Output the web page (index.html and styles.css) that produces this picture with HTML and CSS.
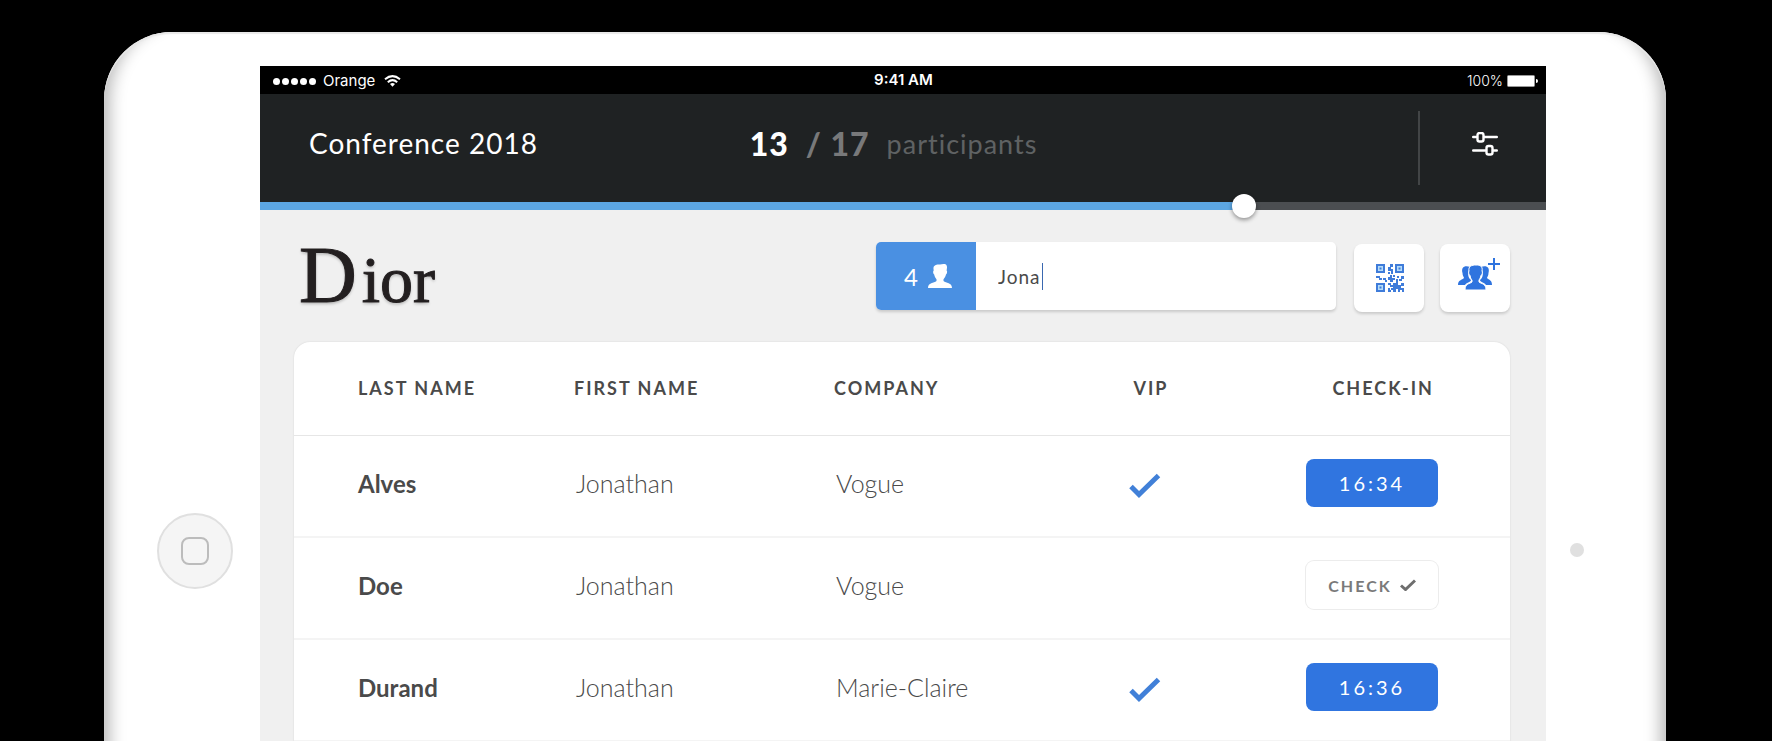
FILE: index.html
```
<!DOCTYPE html>
<html lang="en">
<head>
  <meta charset="UTF-8">
  <title>Conference 2018 - Check-in</title>
  <link rel="stylesheet" href="styles.css">
</head>
<body>

  <div class="tablet">
    <div class="bezel bezel-left">
      <button class="home-button" aria-label="Home"><span></span></button>
    </div>

    <main class="screen">
      <div class="status-bar">
        <div class="carrier">
          <div class="signal"><i></i><i></i><i></i><i></i><i></i></div>
          <span>Orange</span>
          <svg width="17" height="12" viewBox="0 0 17 12" fill="none" stroke="#fff" stroke-width="2">
            <path d="M1 4.200Q8.500-2 16 4.200M3.800 7.200Q8.500 3 13.200 7.200"/>
            <path d="M6 9Q8.500 6.800 11 9L8.500 11.800Z" fill="#fff" stroke="none"/>
          </svg>
        </div>
        <span class="clock">9:41 AM</span>
        <div class="battery">
          <span>100%</span>
          <svg width="31" height="12" viewBox="0 0 31 12">
            <rect x="0.5" y="0.5" width="27" height="11" rx="1" fill="#fff" stroke="#999"/>
            <path d="M29 4q2 0 2 2t-2 2z" fill="#fff"/>
          </svg>
        </div>
      </div>

      <header class="header">
        <h1>Conference 2018</h1>
        <p class="counter">
          <strong>13</strong>
          <span class="total">/ 17</span>
          <span class="label">participants</span>
        </p>
        <div class="actions">
          <button class="filter-button" aria-label="Filters">
            <svg width="26" height="24" viewBox="0 0 26 24" fill="none" stroke="#fff" stroke-width="2.4" stroke-linecap="round">
              <path d="M1.200 5h3M12 5h12.800M1.200 18.500h12M21 18.500h3.800"/>
              <rect x="5.500" y="1" width="6" height="8.500" rx="2"/>
              <rect x="14.500" y="14" width="6" height="8.500" rx="2"/>
            </svg>
          </button>
        </div>
      </header>
      <input class="progress" type="range" min="0" max="100" value="77" aria-label="Checked-in participants">

      <section class="content">
        <div class="toolbar">
          <div class="logo"><span>D</span>ior</div>
          <div class="search">
            <label class="search-count" for="search">
              4
              <svg width="24" height="24" viewBox="0 0 24 24" fill="#fff">
                <path d="M5.500 5C5 1 9 0 12 0.600C14 0 16-0.200 18 0.400C19.500 2 19 4 18.600 6.500C19.600 7 19 10 18 10.600C17.500 13 16.500 14 15.500 15.200V17C18 19 24 18.500 24 24H0C0 18.500 6 19 8.500 17V15.200C7.500 14 6.600 13 6.200 10.600C5 10 4.800 7 5.700 6.600Z"/>
              </svg>
            </label>
            <input type="text" id="search" value="Jona" size="4">
            <span class="caret"></span>
          </div>
          <button class="tool-button" aria-label="Scan QR code">
            <svg width="28" height="28" viewBox="0 0 28 28" fill="#3f7cda">
              <path d="M2 2h5v5h-5zM21 2h5v5h-5zM2 21h5v5h-5z" fill="#b5dcf8"/>
              <path fill-rule="evenodd" d="M0 0h9v9h-9zM2 2v5h5v-5zM19 0h9v9h-9zM21 2v5h5v-5zM0 19h9v9h-9zM2 21v5h5v-5z"/>
              <path d="M3.500 3.500h2v2h-2zM22.500 3.500h2v2h-2zM3.500 22.500h2v2h-2z"/>
              <path d="M14 0h3v3h-2v2h2v5h-2v-3h-3v-4h2zM12 8h2v2h-2zM0 12h4v2h2v2h-3v-2h-3zM7 14h3v2h-3zM12 13h2v-2h2v3h3v2h-2v2h-3v-2h-2zM17 11h2v2h-2zM21 12h2v2h-2zM25 12h3v3h-2v2h-3v-2h2zM9 16h2v2h-2zM20 15h2v2h-2z"/>
              <path d="M12 19h3v2h2v-2h3v-2h2v4h3v-2h3v3h-3v2h3v2h-4v2h-2v-3h-2v3h-3v-2h-2v-2h2v-1h-3v-2h-2zM12 24h2v2h1v2h-3zM26 26h2v2h-2z"/>
            </svg>
          </button>
          <button class="tool-button" aria-label="Add participants">
            <svg class="people" width="42" height="32" viewBox="0 0 42 32" fill="#2f74df">
              <path d="M12 9C6 7 3 10 4.500 15C4.500 18 6 19 6 20C4 22 0 22 0 27H7C9 24 13 24 13 22C10 20 9 15 12 9Z"/>
              <path d="M23 9C29 7 32 10 30.500 15C30.500 18 29 19 29 20C31 22 34 22 34 27H28C26 24 22 24 22 22C25 20 26 15 23 9Z"/>
              <path d="M11 13C10 8 14 7 18 7C22 7 25 8 24 13C25 14 24 17 23 17.500C22.500 20 21.500 21 21 22V24C23 26 28 25 28 32H7C7 25 12 26 14 24V22C13 21 12.500 20 12 17.500C11 17 10 14 11 13Z" stroke="#fff"/>
              <path d="M30 5h5V0h2v5h5v2h-5v5h-2V7h-5z"/>
            </svg>
          </button>
        </div>

        <div class="card">
          <table>
            <colgroup>
              <col class="col-last">
              <col class="col-first">
              <col class="col-company">
              <col class="col-vip">
              <col class="col-check">
            </colgroup>
            <thead>
              <tr>
                <th>LAST NAME</th>
                <th>FIRST NAME</th>
                <th>COMPANY</th>
                <th class="vip-cell">VIP</th>
                <th class="check-cell">CHECK-IN</th>
              </tr>
            </thead>
            <tbody>
              <tr>
                <td class="last-name">Alves</td>
                <td>Jonathan</td>
                <td>Vogue</td>
                <td class="vip-cell">
                  <svg class="vip" width="32" height="26" viewBox="0 0 32 26" role="img" aria-label="VIP"><path d="M2 13.500L10 21.500L29.500 2.500"/></svg>
                </td>
                <td class="check-cell"><button class="check-button checked">16:34</button></td>
              </tr>
              <tr>
                <td class="last-name">Doe</td>
                <td>Jonathan</td>
                <td>Vogue</td>
                <td></td>
                <td class="check-cell">
                  <button class="check-button">CHECK
                    <svg width="16" height="12" viewBox="0 0 16 12"><path d="M1 6.500L5.500 10.500L15 1.500"/></svg>
                  </button>
                </td>
              </tr>
              <tr>
                <td class="last-name">Durand</td>
                <td>Jonathan</td>
                <td>Marie-Claire</td>
                <td class="vip-cell">
                  <svg class="vip" width="32" height="26" viewBox="0 0 32 26" role="img" aria-label="VIP"><path d="M2 13.500L10 21.500L29.500 2.500"/></svg>
                </td>
                <td class="check-cell"><button class="check-button checked">16:36</button></td>
              </tr>
            </tbody>
          </table>
        </div>
      </section>
    </main>

    <div class="bezel bezel-right">
      <span class="camera"></span>
    </div>
  </div>

</body>
</html>
```
FILE: styles.css
```
* {
  margin: 0;
  padding: 0;
  box-sizing: border-box;
}

body {
  font-family: Lato, "Open Sans", sans-serif;
  background-color: #000;
  color: #4a4a4a;
  height: 100vh;
  overflow: hidden;
}

button {
  font-family: inherit;
  border: none;
  cursor: pointer;
}

.tablet {
  display: flex;
  min-height: 100vh;
  margin: 32px 106px 0 104px;
  padding-top: 34px;
  background-color: #fff;
  border-radius: 68px 68px 0 0;
  box-shadow: inset 0 2px 1px #e8e8e8, inset 22px 0 16px -16px #bbb, inset -22px 0 16px -16px #bbb;
}

.bezel {
  display: flex;
  justify-content: center;
}

.bezel-left {
  width: 156px;
  padding-top: 447px;
  padding-left: 26px;
}

.bezel-right {
  width: 120px;
  padding-top: 477px;
  padding-right: 58px;
}

.home-button {
  display: flex;
  align-items: center;
  justify-content: center;
  flex-shrink: 0;
  width: 76px;
  height: 76px;
  border: 2px solid #e0e0e0;
  border-radius: 50%;
  background-color: #f5f5f5;
}

.home-button span {
  width: 28px;
  height: 28px;
  border: 2px solid #bcbcbc;
  border-radius: 8px;
}

.camera {
  width: 14px;
  height: 14px;
  border-radius: 50%;
  background-color: #e0e0e0;
}

.screen {
  flex: 1;
  background-color: #f0f0f0;
}

.status-bar {
  display: grid;
  grid-template-columns: 1fr auto 1fr;
  align-items: center;
  height: 28px;
  padding: 2px 8px 0 13px;
  background-color: #000;
  color: #fff;
  font-family: Inter, sans-serif;
  font-size: 15px;
  line-height: 20px;
}

.carrier,
.battery {
  display: flex;
  align-items: center;
  gap: 7px;
}

.carrier svg {
  margin-left: 2px;
}

.battery {
  justify-content: flex-end;
  gap: 4px;
  font-size: 14px;
  font-weight: 300;
}

.signal {
  display: flex;
  gap: 2px;
}

.signal i {
  width: 7px;
  height: 7px;
  border-radius: 50%;
  background-color: #fff;
}

.clock {
  padding-right: 4px;
  padding-bottom: 2px;
  font-weight: 600;
}

.header {
  display: grid;
  grid-template-columns: 1fr auto 1fr;
  align-items: center;
  height: 108px;
  padding: 0 48px 0 49px;
  background-color: #1f2223;
  color: #fff;
}

.header h1 {
  padding-bottom: 10px;
  font-size: 28px;
  font-weight: 400;
  letter-spacing: 1px;
}

.counter {
  display: flex;
  align-items: center;
  gap: 17px;
  padding-right: 20px;
  padding-bottom: 10px;
  font-size: 32px;
}

.counter strong,
.counter .total {
  font-weight: 900;
  letter-spacing: 1px;
}

.counter .total {
  color: #78797a;
}

.counter .label {
  color: #5f6263;
  font-size: 27px;
  letter-spacing: 1px;
}

.actions {
  display: flex;
  justify-content: flex-end;
}

.filter-button {
  display: flex;
  align-items: center;
  justify-content: flex-end;
  width: 80px;
  height: 74px;
  padding-bottom: 8px;
  border-left: 2px solid #424546;
  background: none;
}

.progress {
  appearance: none;
  display: block;
  width: 100%;
  height: 8px;
  background: linear-gradient(to right, #5ca6e2 76%, #4b4e51 76%);
}

.progress::-webkit-slider-thumb {
  appearance: none;
  width: 24px;
  height: 24px;
  border-radius: 50%;
  background-color: #fff;
  box-shadow: 0 2px 4px rgba(0, 0, 0, 0.4);
}

.content {
  padding: 32px 36px 0 34px;
}

.toolbar {
  display: flex;
  align-items: center;
  height: 70px;
  margin-bottom: 30px;
}

.logo {
  flex: 1;
  padding-left: 5px;
  color: #231f20;
  font-family: "Liberation Serif", serif;
  font-size: 66px;
  line-height: 70px;
  text-shadow: 0 2px 3px rgba(0, 0, 0, 0.25);
  -webkit-text-stroke: 1px #231f20;
}

.logo span {
  margin-right: 5px;
  font-size: 80px;
}

.search {
  display: flex;
  align-items: center;
  width: 460px;
  height: 68px;
  margin-right: 18px;
  margin-bottom: 2px;
  border-radius: 5px;
  background-color: #fff;
  box-shadow: 0 2px 3px rgba(0, 0, 0, 0.16);
  overflow: hidden;
}

.search-count {
  display: flex;
  align-items: center;
  justify-content: center;
  gap: 10px;
  width: 100px;
  height: 100%;
  padding-left: 4px;
  background-color: #4a90e2;
  color: #fff;
  font-size: 24px;
}

.search input {
  field-sizing: content;
  max-width: 320px;
  margin-left: 22px;
  border: none;
  outline: none;
  background: none;
  color: #4a4a4a;
  caret-color: transparent;
  font-family: inherit;
  font-size: 19px;
  letter-spacing: 1px;
}

.caret {
  width: 1px;
  height: 27px;
  margin-left: 1px;
  background-color: #3a68b0;
}

.tool-button {
  display: flex;
  align-items: center;
  justify-content: center;
  width: 70px;
  height: 68px;
  margin-top: 2px;
  padding-left: 2px;
  border-radius: 8px;
  background-color: #fff;
  box-shadow: 0 2px 3px rgba(0, 0, 0, 0.16);
}

.tool-button + .tool-button {
  margin-left: 16px;
}

.people {
  margin-left: 6px;
  margin-bottom: 8px;
}

.card {
  min-height: 420px;
  border-radius: 16px 16px 0 0;
  background-color: #fff;
  box-shadow: 0 0 2px rgba(0, 0, 0, 0.12);
}

table {
  width: 100%;
  table-layout: fixed;
  border-collapse: separate;
  border-spacing: 0;
}

.col-last {
  width: 280px;
}

.col-first {
  width: 260px;
}

.col-company {
  width: 262px;
}

.col-vip {
  width: 98px;
}

th {
  height: 94px;
  padding-bottom: 2px;
  border-bottom: 1px solid #e6e6e6;
  font-size: 18px;
  font-weight: 700;
  letter-spacing: 2px;
  text-align: left;
}

th:first-child,
td:first-child {
  padding-left: 64px;
}

td {
  height: 102px;
  padding-bottom: 6px;
  border-bottom: 2px solid #f4f4f4;
  font-size: 25px;
  font-weight: 300;
}

td:nth-child(2),
td:nth-child(3) {
  padding-left: 2px;
}

.last-name {
  font-size: 24px;
  font-weight: 700;
}

.vip-cell {
  text-align: center;
}

th.vip-cell {
  padding-left: 12px;
}

.check-cell {
  padding-right: 72px;
  text-align: right;
}

th.check-cell {
  padding-right: 76px;
}

.vip {
  display: inline-block;
  vertical-align: middle;
  fill: none;
  stroke: #4180d8;
  stroke-width: 5;
}

.check-button {
  display: inline-flex;
  align-items: center;
  justify-content: center;
  gap: 8px;
  width: 132px;
  height: 48px;
  border-radius: 8px;
  background-color: #fff;
  box-shadow: 0 0 0 1px #ececec;
  color: #7a7a7a;
  font-size: 16px;
  font-weight: 700;
  letter-spacing: 2px;
  vertical-align: middle;
}

.check-button svg {
  fill: none;
  stroke: #6e6e6e;
  stroke-width: 3;
}

.check-button.checked {
  background-color: #3075e0;
  box-shadow: none;
  color: #fff;
  font-size: 20px;
  font-weight: 400;
  letter-spacing: 3px;
}
```
